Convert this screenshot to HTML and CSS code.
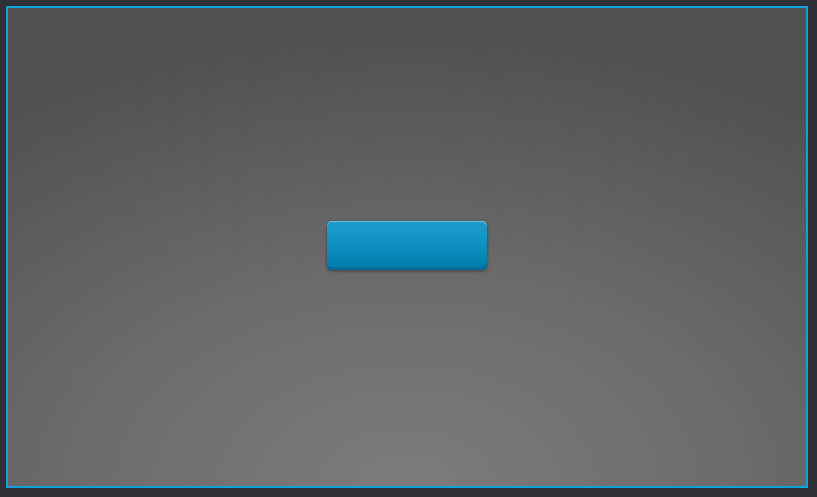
FILE: index.html
```html
<!DOCTYPE html>
<html>
<head>
<meta charset="utf-8">
<link rel="stylesheet" href="styles.css">
</head>
<body>
<div class="stage">
  <button class="btn" type="button"></button>
</div>
</body>
</html>
```
FILE: styles.css
```css
html, body { margin: 0; padding: 0; }
body {
  background: #2f3136;
  width: 817px;
  height: 497px;
  padding: 6px 0 0 6px;
  box-sizing: border-box;
  font-family: "Liberation Sans", Arial, sans-serif;
}
.stage {
  width: 802px;
  height: 482px;
  box-sizing: border-box;
  border: 2px solid #0fa0e0;
  background: radial-gradient(ellipse 90% 95% at 50% 100%, #7c7c7c 0%, #6c6c6c 45%, #505050 100%);
  display: flex;
  align-items: flex-start;
  justify-content: center;
  padding-top: 213px;
}
.btn {
  width: 160px;
  height: 49px;
  border: none;
  border-radius: 5px;
  padding: 0;
  background: linear-gradient(to bottom, #1a9ccd 0%, #1193c5 40%, #007aa9 100%);
  box-shadow: inset 0 1px 0 #6fbde0, inset 0 -3px 0 #006c98, 0 1px 3px rgba(0,0,0,0.45);
}
```
